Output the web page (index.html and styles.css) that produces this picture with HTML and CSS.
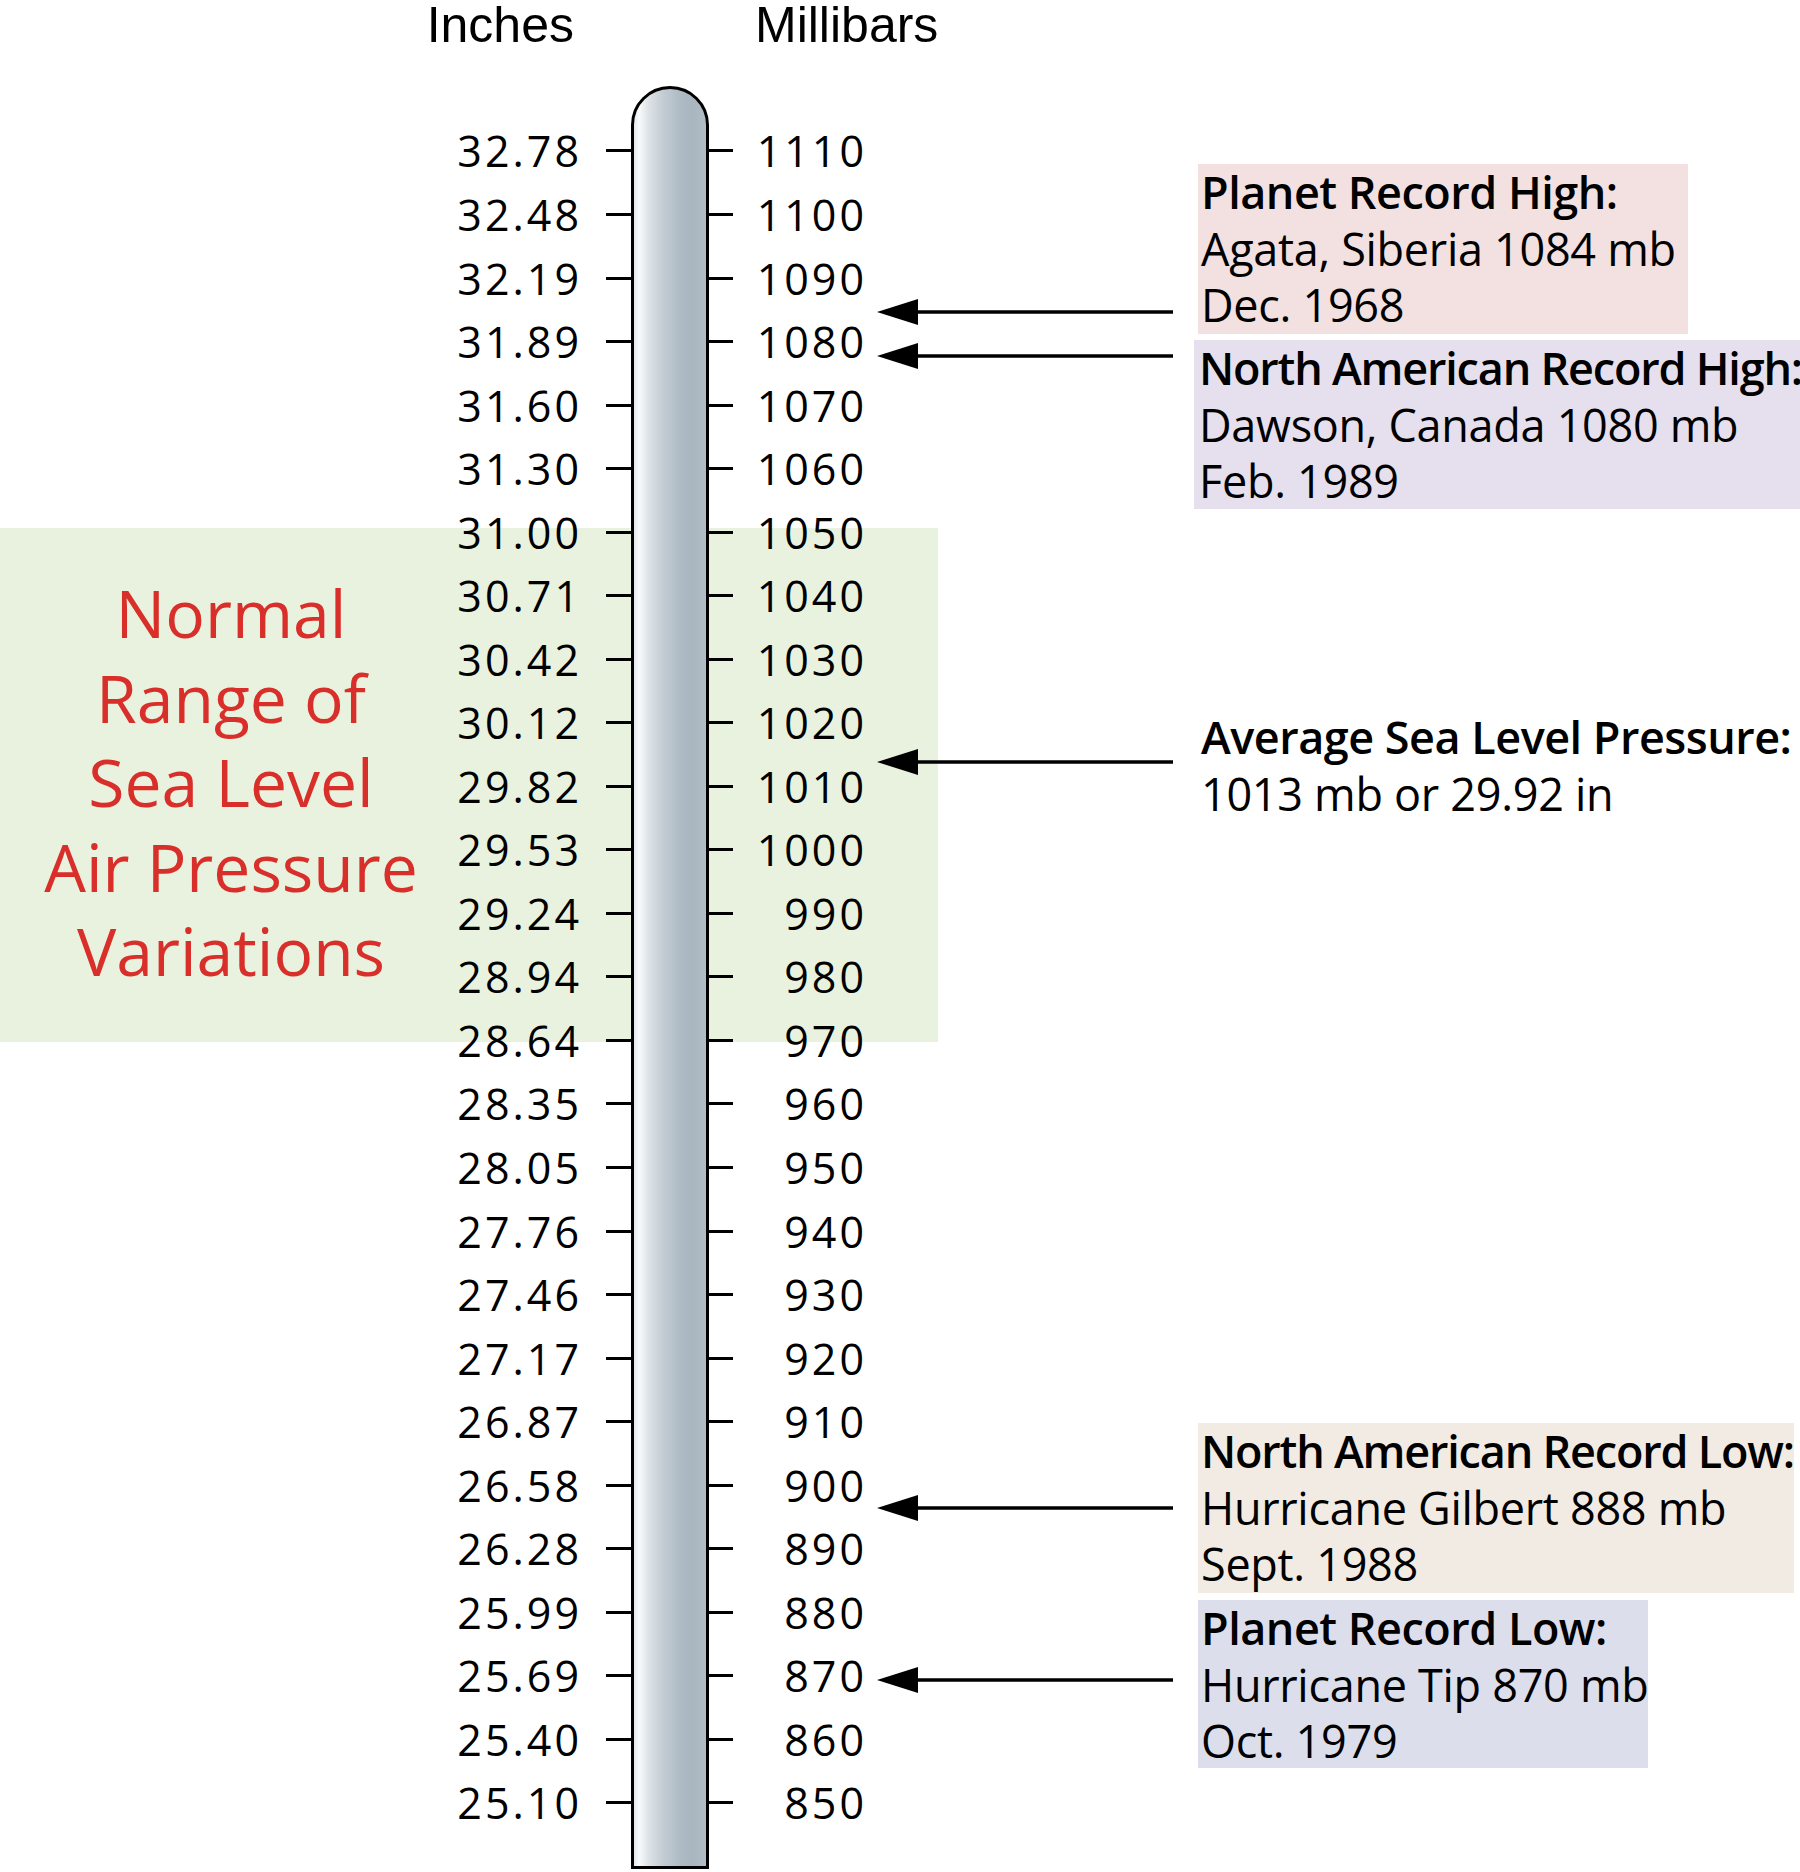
FILE: index.html
```html
<!DOCTYPE html>
<html lang="en">
<head>
<meta charset="utf-8">
<title>Sea Level Air Pressure</title>
<link rel="stylesheet" href="styles.css">
</head>
<body>
<main class="page">
  <section class="scale">
    <div class="hdr hdr-in">Inches</div>
    <div class="hdr hdr-mb">Millibars</div>

    <div class="band">
      <div class="range-label">Normal<br>Range of<br>Sea Level<br>Air Pressure<br>Variations</div>
    </div>

    <div class="tube"></div>

    <div class="ticks">
      <div class="row"><span class="in">32.78</span><i class="tl"></i><i class="tr"></i><span class="mb">1110</span></div>
      <div class="row"><span class="in">32.48</span><i class="tl"></i><i class="tr"></i><span class="mb">1100</span></div>
      <div class="row"><span class="in">32.19</span><i class="tl"></i><i class="tr"></i><span class="mb">1090</span></div>
      <div class="row"><span class="in">31.89</span><i class="tl"></i><i class="tr"></i><span class="mb">1080</span></div>
      <div class="row"><span class="in">31.60</span><i class="tl"></i><i class="tr"></i><span class="mb">1070</span></div>
      <div class="row"><span class="in">31.30</span><i class="tl"></i><i class="tr"></i><span class="mb">1060</span></div>
      <div class="row"><span class="in">31.00</span><i class="tl"></i><i class="tr"></i><span class="mb">1050</span></div>
      <div class="row"><span class="in">30.71</span><i class="tl"></i><i class="tr"></i><span class="mb">1040</span></div>
      <div class="row"><span class="in">30.42</span><i class="tl"></i><i class="tr"></i><span class="mb">1030</span></div>
      <div class="row"><span class="in">30.12</span><i class="tl"></i><i class="tr"></i><span class="mb">1020</span></div>
      <div class="row"><span class="in">29.82</span><i class="tl"></i><i class="tr"></i><span class="mb">1010</span></div>
      <div class="row"><span class="in">29.53</span><i class="tl"></i><i class="tr"></i><span class="mb">1000</span></div>
      <div class="row"><span class="in">29.24</span><i class="tl"></i><i class="tr"></i><span class="mb">990</span></div>
      <div class="row"><span class="in">28.94</span><i class="tl"></i><i class="tr"></i><span class="mb">980</span></div>
      <div class="row"><span class="in">28.64</span><i class="tl"></i><i class="tr"></i><span class="mb">970</span></div>
      <div class="row"><span class="in">28.35</span><i class="tl"></i><i class="tr"></i><span class="mb">960</span></div>
      <div class="row"><span class="in">28.05</span><i class="tl"></i><i class="tr"></i><span class="mb">950</span></div>
      <div class="row"><span class="in">27.76</span><i class="tl"></i><i class="tr"></i><span class="mb">940</span></div>
      <div class="row"><span class="in">27.46</span><i class="tl"></i><i class="tr"></i><span class="mb">930</span></div>
      <div class="row"><span class="in">27.17</span><i class="tl"></i><i class="tr"></i><span class="mb">920</span></div>
      <div class="row"><span class="in">26.87</span><i class="tl"></i><i class="tr"></i><span class="mb">910</span></div>
      <div class="row"><span class="in">26.58</span><i class="tl"></i><i class="tr"></i><span class="mb">900</span></div>
      <div class="row"><span class="in">26.28</span><i class="tl"></i><i class="tr"></i><span class="mb">890</span></div>
      <div class="row"><span class="in">25.99</span><i class="tl"></i><i class="tr"></i><span class="mb">880</span></div>
      <div class="row"><span class="in">25.69</span><i class="tl"></i><i class="tr"></i><span class="mb">870</span></div>
      <div class="row"><span class="in">25.40</span><i class="tl"></i><i class="tr"></i><span class="mb">860</span></div>
      <div class="row"><span class="in">25.10</span><i class="tl"></i><i class="tr"></i><span class="mb">850</span></div>
    </div>
  </section>

  <section class="notes">
    <div class="note n1">
      <svg class="arrow" viewBox="0 0 296 26" width="296" height="26"><path d="M0 13 L41 0 L41 26 Z"/><line x1="40" y1="13" x2="296" y2="13"/></svg>
      <div class="box box-pink">
        <b class="title">Planet Record High:</b>
        <span class="line">Agata, Siberia 1084 mb</span>
        <span class="line">Dec. 1968</span>
      </div>
    </div>
    <div class="note n2">
      <svg class="arrow" viewBox="0 0 296 26" width="296" height="26"><path d="M0 13 L41 0 L41 26 Z"/><line x1="40" y1="13" x2="296" y2="13"/></svg>
      <div class="box box-lilac">
        <b class="title title-long">North American Record High:</b>
        <span class="line">Dawson, Canada 1080 mb</span>
        <span class="line">Feb. 1989</span>
      </div>
    </div>
    <div class="note n3">
      <svg class="arrow" viewBox="0 0 296 26" width="296" height="26"><path d="M0 13 L41 0 L41 26 Z"/><line x1="40" y1="13" x2="296" y2="13"/></svg>
      <div class="box box-plain">
        <b class="title">Average Sea Level Pressure:</b>
        <span class="line">1013 mb or 29.92 in</span>
      </div>
    </div>
    <div class="note n4">
      <svg class="arrow" viewBox="0 0 296 26" width="296" height="26"><path d="M0 13 L41 0 L41 26 Z"/><line x1="40" y1="13" x2="296" y2="13"/></svg>
      <div class="box box-sand">
        <b class="title title-long">North American Record Low:</b>
        <span class="line">Hurricane Gilbert 888 mb</span>
        <span class="line">Sept. 1988</span>
      </div>
    </div>
    <div class="note n5">
      <svg class="arrow" viewBox="0 0 296 26" width="296" height="26"><path d="M0 13 L41 0 L41 26 Z"/><line x1="40" y1="13" x2="296" y2="13"/></svg>
      <div class="box box-blue">
        <b class="title">Planet Record Low:</b>
        <span class="line">Hurricane Tip 870 mb</span>
        <span class="line">Oct. 1979</span>
      </div>
    </div>
  </section>
</main>
</body>
</html>
```

FILE: styles.css
```css
html, body {
  margin: 0;
  padding: 0;
  background: #ffffff;
}

body {
  width: 1800px;
  height: 1872px;
  overflow: hidden;
  color: #000;
  font-family: "Open Sans", "DejaVu Sans", sans-serif;
}

.page {
  display: grid;
  grid-template-columns: 877px 923px;
  height: 1872px;
}

/* ---------- scale ---------- */
.scale {
  display: grid;
  grid-template-columns: 606px 25px 78px 24px 144px;
  grid-template-rows: 86px 33.23px 1715.58px 34.19px;
  grid-column: 1;
  grid-row: 1;
  align-self: start;
}

.hdr {
  grid-row: 1;
  align-self: start;
  font-family: "Liberation Sans", Arial, sans-serif;
  font-size: 50px;
  line-height: 50px;
  white-space: nowrap;
}

.hdr-in {
  grid-column: 1;
  text-align: right;
  padding-right: 32px;
}

.hdr-mb {
  grid-column: 5;
  padding-left: 22px;
}

.band {
  grid-column: 1 / -1;
  grid-row: 3;
  align-self: start;
  width: 938px;
  height: 514px;
  margin-top: 408.77px;
  background: #e9f2de;
  display: flex;
  align-items: center;
}

.range-label {
  width: 462px;
  padding-bottom: 7px;
  text-align: center;
  color: #d92f2a;
  font-size: 66px;
  line-height: 84.5px;
  white-space: nowrap;
}

.tube {
  grid-column: 3;
  grid-row: 2 / 5;
  box-sizing: border-box;
  border: 3px solid #000;
  border-radius: 39px 39px 0 0;
  background: linear-gradient(90deg, #e4e9ed 0%, #fafbfc 7%, #dde3e7 20%, #c2cbd2 42%, #adbac3 66%, #a9b6bf 82%, #b2bdc6 100%);
}

.ticks {
  grid-column: 1 / -1;
  grid-row: 3;
  display: flex;
  flex-direction: column;
}

.row {
  display: grid;
  grid-template-columns: 606px 25px 78px 24px 144px;
  height: 63.54px;
  align-items: center;
  font-size: 43px;
  letter-spacing: 3px;
  line-height: 1;
}

.in {
  grid-column: 1;
  text-align: right;
  padding-right: 24px;
}

.tl {
  grid-column: 2;
  height: 3px;
  background: #000;
}

.tr {
  grid-column: 4;
  height: 3px;
  background: #000;
}

.mb {
  grid-column: 5;
  text-align: right;
  padding-right: 10px;
}

/* ---------- notes ---------- */
.notes {
  grid-column: 2;
  grid-row: 1;
  display: flex;
  flex-direction: column;
  align-items: flex-start;
}

.note {
  display: flex;
  align-items: flex-start;
}

.arrow {
  flex: none;
  display: block;
  fill: #000;
  stroke: #000;
}

.arrow path {
  stroke: none;
}

.arrow line {
  stroke-width: 3.5;
}

.box {
  box-sizing: border-box;
  margin-left: 25px;
  padding-left: 3px;
  font-size: 45px;
  line-height: 56.5px;
  white-space: nowrap;
}

.title,
.line {
  display: block;
}

.line {
  letter-spacing: -0.3px;
}

.title {
  font-weight: 600;
  letter-spacing: -0.5px;
}

.title-long {
  letter-spacing: -1.2px;
}

.box-pink  { width: 490px; height: 170px; background: #f2e1e0; }
.box-lilac { width: 606px; height: 169px; background: #e6e0ee; margin-left: 21px; padding-left: 5px; }
.box-plain { width: 600px; }
.box-sand  { width: 596px; height: 170px; background: #f2ebe4; }
.box-blue  { width: 450px; height: 168px; background: #dcdeeb; }

.n1 { margin-top: 164px; }
.n1 .arrow { margin-top: 135px; }

.n2 { margin-top: 6px; }
.n2 .arrow { margin-top: 3px; }

.n3 { margin-top: 200px; }
.n3 .arrow { margin-top: 40px; }

.n4 { margin-top: 601px; }
.n4 .arrow { margin-top: 72px; }

.n5 { margin-top: 7px; }
.n5 .arrow { margin-top: 67px; }
```
